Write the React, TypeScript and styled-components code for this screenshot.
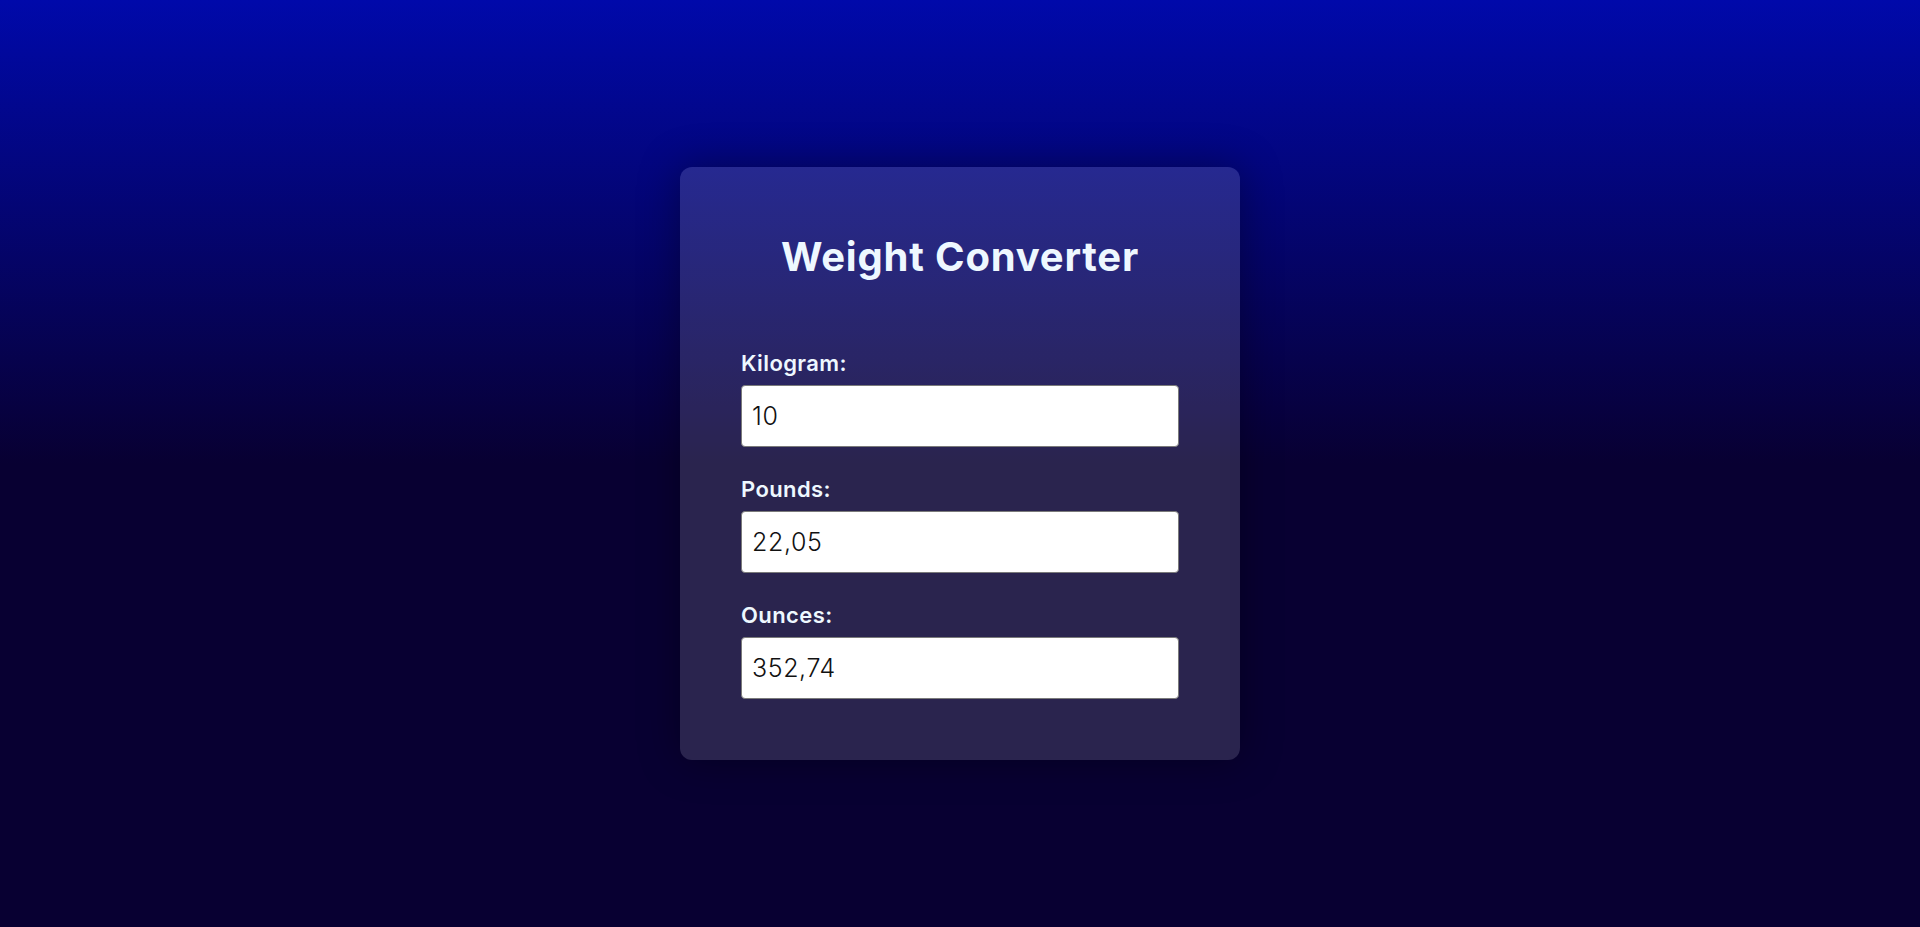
import React, { useState } from "react";
import styled, { createGlobalStyle } from "styled-components";

const GlobalStyle = createGlobalStyle`
  html, body {
    margin: 0;
    padding: 0;
  }
  body {
    font-family: "Inter", "Liberation Sans", sans-serif;
  }
  * { box-sizing: border-box; }
`;

const Page = styled.div`
  min-height: 100vh;
  display: flex;
  align-items: center;
  justify-content: center;
  background: linear-gradient(to bottom, #0009aa 0%, #080032 50%, #080032 100%);
`;

const Card = styled.div`
  width: 560px;
  padding: 66px 61px 61px;
  border-radius: 12px;
  background: rgba(255, 255, 255, 0.14);
  box-shadow: 0 0 40px rgba(0, 0, 0, 0.35);
`;

const Title = styled.h1`
  margin: 0 0 70px;
  font-family: "Inter", "Liberation Sans", sans-serif;
  font-size: 40px;
  line-height: 48px;
  font-weight: 700;
  text-align: center;
  color: #eef8ff;
  letter-spacing: 0.8px;
`;

const Field = styled.div<{ $last?: boolean }>`
  display: flex;
  flex-direction: column;
  margin-bottom: ${(p) => (p.$last ? "0" : "30px")};
`;

const Label = styled.label`
  display: block;
  margin-bottom: 10px;
  font-family: "Inter", "Liberation Sans", sans-serif;
  font-size: 22px;
  line-height: 24px;
  font-weight: 600;
  letter-spacing: 0.4px;
  color: #eef8ff;
`;

const Input = styled.input`
  width: 100%;
  height: 62px;
  padding: 0 10px;
  border: 1px solid #7a7a7a;
  border-radius: 4px;
  background: #ffffff;
  font-family: "Inter", "Liberation Sans", sans-serif;
  font-size: 25px;
  font-weight: 300;
  letter-spacing: 0.6px;
  color: #111111;
  outline: none;
`;

const fmt = (n: number) => n.toFixed(2).replace(".", ",");

export default function App() {
  const [kg, setKg] = useState("10");
  const kgNum = parseFloat(kg.replace(",", ".")) || 0;
  const pounds = fmt(kgNum * 2.20462);
  const ounces = fmt(kgNum * 35.274);

  return (
    <>
      <GlobalStyle />
      <Page>
        <Card>
          <Title>Weight Converter</Title>
          <Field>
            <Label htmlFor="kg">Kilogram:</Label>
            <Input id="kg" value={kg} onChange={(e) => setKg(e.target.value)} />
          </Field>
          <Field>
            <Label htmlFor="lb">Pounds:</Label>
            <Input id="lb" value={pounds} readOnly />
          </Field>
          <Field $last>
            <Label htmlFor="oz">Ounces:</Label>
            <Input id="oz" value={ounces} readOnly />
          </Field>
        </Card>
      </Page>
    </>
  );
}
